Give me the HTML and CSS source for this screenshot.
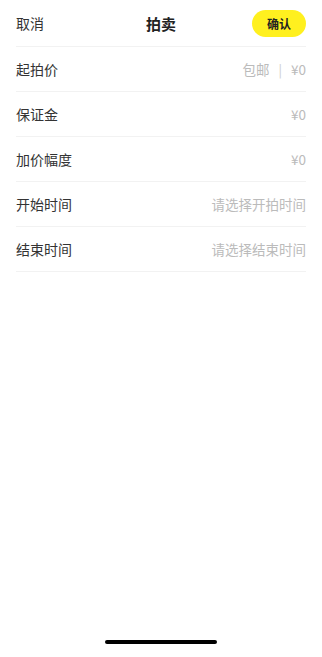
FILE: index.html
```html
<!DOCTYPE html>
<html>
<head>
    <title>拍卖</title>
    <meta name="viewport" content="width=device-width, initial-scale=1.0">
    <link rel="stylesheet" href="styles.css">
</head>
<body>
    <div class="page">
        <!-- top bar -->
        <div class="nav-bar">
            <span class="nav-cancel">取消</span>
            <span class="nav-title">拍卖</span>
            <span class="nav-confirm">确认</span>
        </div>

        <!-- auction fields -->
        <div class="form-list">
            <div class="form-row">
                <span class="row-label">起拍价</span>
                <span class="row-value">包邮<span class="row-sep">|</span>¥0</span>
            </div>
            <div class="form-row">
                <span class="row-label">保证金</span>
                <span class="row-value">¥0</span>
            </div>
            <div class="form-row">
                <span class="row-label">加价幅度</span>
                <span class="row-value">¥0</span>
            </div>
            <div class="form-row">
                <span class="row-label">开始时间</span>
                <span class="row-value">请选择开拍时间</span>
            </div>
            <div class="form-row">
                <span class="row-label">结束时间</span>
                <span class="row-value">请选择结束时间</span>
            </div>
        </div>

        <div class="home-bar"></div>
    </div>
</body>
</html>
```

FILE: styles.css
```css
body {
    margin: 0;
    background-color: #ffffff;
    font-family: "Noto Sans CJK SC", "Noto Sans", sans-serif;
    color: #333333;
}

.page {
    display: flex;
    flex-direction: column;
    height: 100vh;
    padding: 0 16px;
    box-sizing: border-box;
}

/* header with cancel / title / confirm */
.nav-bar {
    display: flex;
    justify-content: space-between;
    align-items: center;
    height: 47px;
    border-bottom: 1px solid #f2f2f2;
    box-sizing: border-box;
    position: relative;
}

.nav-cancel {
    font-size: 14px;
    color: #333333;
}

.nav-title {
    position: absolute;
    left: 50%;
    transform: translateX(-50%);
    font-size: 15px;
    font-weight: bold;
    color: #222222;
}

.nav-confirm {
    display: flex;
    align-items: center;
    justify-content: center;
    width: 54px;
    height: 27px;
    margin-top: 1px;
    border-radius: 14px;
    background-color: #fff01f;
    font-size: 12px;
    font-weight: bold;
    color: #222222;
}

.form-list {
    display: flex;
    flex-direction: column;
}

.form-row {
    display: flex;
    justify-content: space-between;
    align-items: center;
    height: 45px;
    border-bottom: 1px solid #f2f2f2;
    box-sizing: border-box;
}

.row-label {
    font-size: 14px;
    color: #333333;
}

.row-value {
    font-size: 13.5px;
    color: #bbbbbb;
}

.row-sep {
    margin: 0 9px;
    font-size: 13px;
    color: #cccccc;
}

/* iOS home indicator */
.home-bar {
    width: 112px;
    height: 4px;
    margin: auto auto 13px;
    border-radius: 2px;
    background-color: #000000;
}
```
